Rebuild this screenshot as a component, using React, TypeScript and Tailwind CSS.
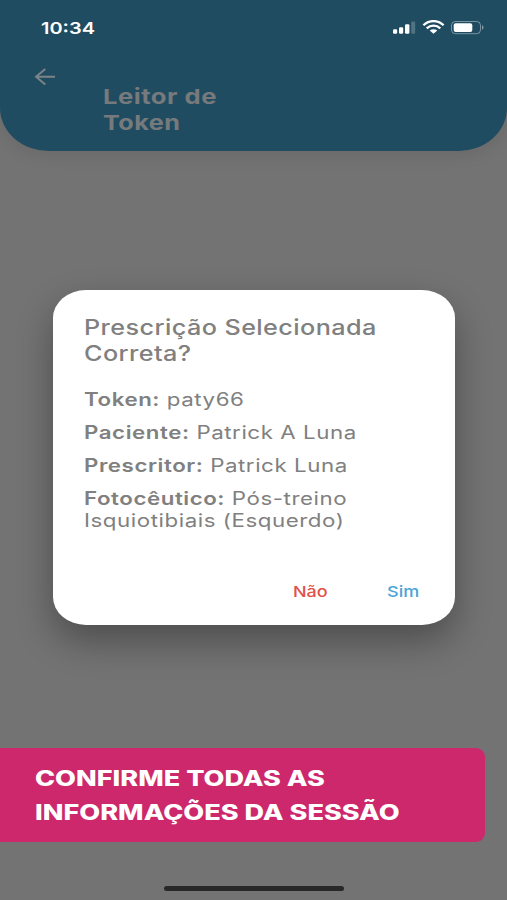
import type { ReactNode } from "react";

function Line({ className, children }: { className: string; children: ReactNode }) {
  return (
    <div className="flex">
      <span className={`block origin-left whitespace-nowrap ${className}`}>{children}</span>
    </div>
  );
}

function Field({ label, value }: { label: string; value: string }) {
  return (
    <Line className="scale-x-[1.22]">
      <b className="font-semibold">{label}</b> {value}
    </Line>
  );
}

function StatusIcons() {
  return (
    <svg width="92" height="16" viewBox="0 0 92 16" fill="none">
      <rect x="1" y="9.3" width="4.2" height="4.4" rx="1.3" fill="#fff" />
      <rect x="7" y="7.2" width="4.2" height="6.5" rx="1.2" fill="#fff" />
      <rect x="13" y="4.2" width="4.4" height="9.5" rx="1.2" fill="#fff" />
      <rect x="19.2" y="1.5" width="4" height="12.2" rx="1.2" fill="#fff" fillOpacity="0.22" />
      <path d="M31.4 5.3C37 -0.3 46 -0.3 51.6 5.3" stroke="#fff" strokeWidth="2.3" />
      <path d="M34.7 8.4C38.6 4.7 44.4 4.7 48.3 8.4" stroke="#fff" strokeWidth="2.2" />
      <path d="M37.7 10.6C40 8.8 43 8.8 45.3 10.6L41.5 13.7Z" fill="#fff" />
      <rect x="59.5" y="1.5" width="29" height="12.2" rx="3.8" stroke="#fff" strokeOpacity="0.4" />
      <rect x="61.7" y="3.2" width="18.6" height="8.8" rx="2" fill="#fff" />
      <path d="M90 5.3C92 6 92 9 90 9.7Z" fill="#fff" fillOpacity="0.45" />
    </svg>
  );
}

export default function App() {
  return (
    <div className="flex h-[900px] w-[507px] flex-col overflow-hidden bg-[#737373] font-['Inter',sans-serif]">
      <header className="h-[151px] shrink-0 rounded-b-[49px_43px] bg-[#1f4c61] shadow-[0_3px_18px_rgba(0,0,0,0.1)]">
        <div className="flex h-[55px] items-start justify-between pl-[41px] pr-[23px] pt-[20px]">
          <Line className="scale-x-[1.21] text-[16.5px] leading-[16px] font-semibold text-white">10:34</Line>
          <StatusIcons />
        </div>
        <div className="flex pl-[34px]">
          <svg className="mt-[13px]" width="22" height="18" viewBox="0 0 22 18" fill="none" stroke="#7d8488" strokeWidth="1.9">
            <path d="M21 8.7H2M11.3 1L2 8.7L11.3 16.4" />
          </svg>
          <h1 className="ml-[46.5px] mt-[29px] text-[20.5px] leading-[25.5px] font-bold tracking-[0.4px] text-[#777a7c]">
            <Line className="scale-x-[1.25]">Leitor de</Line>
            <Line className="scale-x-[1.23]">Token</Line>
          </h1>
        </div>
      </header>

      <section className="ml-[53px] mt-[139px] flex h-[335px] w-[402px] shrink-0 flex-col rounded-[33px_/_28px] bg-white pl-[31px] pt-[25px] text-[#808080] shadow-[0_16px_36px_rgba(0,0,0,0.33)]">
        <h2 className="text-[21px] leading-[26px] font-medium tracking-[0.35px]">
          <Line className="scale-x-[1.2]">Prescrição Selecionada</Line>
          <Line className="scale-x-[1.2]">Correta?</Line>
        </h2>
        <div className="mt-[21px] flex flex-col gap-[11px] text-[18.3px] leading-[22px] tracking-[0.45px]">
          <Field label="Token:" value="paty66" />
          <Field label="Paciente:" value="Patrick A Luna" />
          <Field label="Prescritor:" value="Patrick Luna" />
          <div>
            <Field label="Fotocêutico:" value="Pós-treino" />
            <Line className="scale-x-[1.22]">Isquiotibiais (Esquerdo)</Line>
          </div>
        </div>
        <div className="mt-[50px] flex text-[15px] leading-[21px] font-medium">
          <button className="ml-[208.5px] w-[94px] text-[#e2504a]"><Line className="scale-x-[1.2]">Não</Line></button>
          <button className="text-[#4ba4d8]"><Line className="scale-x-[1.2]">Sim</Line></button>
        </div>
      </section>

      <section className="mt-[123px] h-[94px] w-[485px] shrink-0 rounded-r-[9px] bg-[#cc286b] pl-[34.5px] pt-[12.5px] text-[21.6px] leading-[34px] font-extrabold text-white">
        <Line className="scale-x-[1.253]">CONFIRME TODAS AS</Line>
        <Line className="scale-x-[1.253]">INFORMAÇÕES DA SESSÃO</Line>
      </section>

      <div className="ml-[164px] mt-[44px] h-[5px] w-[180px] shrink-0 rounded-full bg-[#282828]" />
    </div>
  );
}
